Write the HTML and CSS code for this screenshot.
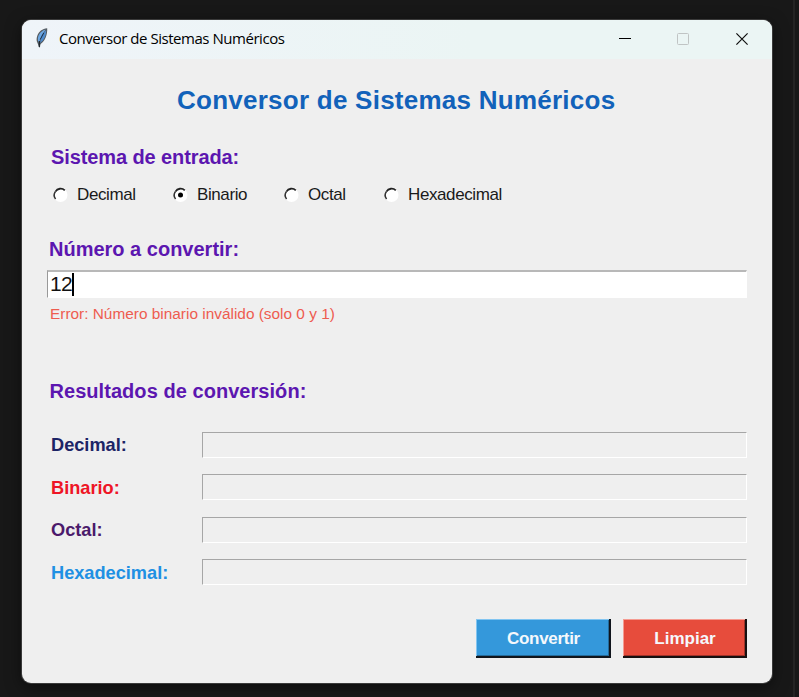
FILE: index.html
```html
<!DOCTYPE html>
<html lang="es">
<head>
<meta charset="utf-8">
<title>Conversor de Sistemas Numéricos</title>
<link rel="stylesheet" href="styles.css">
</head>
<body>
<svg class="defs" width="0" height="0" aria-hidden="true">
  <symbol id="radio" viewBox="0 0 16 16">
    <circle cx="8.5" cy="8" r="7" fill="#fff"/>
    <path d="M3.6 12 A6.1 6.1 0 0 1 3.4 4.6" fill="none" stroke="#333" stroke-width="1.6"/>
    <path d="M3.4 4.6 A6.1 6.1 0 0 1 12.8 3.4" fill="none" stroke="#222" stroke-width="1.8"/>
  </symbol>
</svg>
<main class="window">
  <header class="titlebar">
    <svg class="feather" viewBox="0 0 14 22" width="14" height="22">
      <path d="M12.2 1.2 C7.5 1.6 3.5 4.5 2.2 9 C1.3 12 1.4 14 2.6 16.3 L4.4 21 L5.6 17 C10 14 12.6 7.5 12.2 1.2Z" fill="#555b60"/>
      <path d="M10.6 2.5 C7 3.5 4 6.5 3.1 10 C2.6 12.5 3 14 3.9 15.8 L7 8Z" fill="#6ba6e2"/>
      <path d="M11.2 3 C11.2 8.5 9.4 12.8 5 16 L6.6 8.5Z" fill="#4e8bcd"/>
      <path d="M8.8 5.8 L5.2 12.5" fill="none" stroke="#182b40" stroke-width="1"/>
      <path d="M4.4 14 V20" fill="none" stroke="#222a32" stroke-width="1.3"/>
    </svg>
    <span class="caption">Conversor de Sistemas Numéricos</span>
    <svg class="controls" viewBox="0 0 125 13" width="125" height="13">
      <path d="M-1 5.5H11" stroke="#000"/>
      <rect x="57.5" y=".5" width="11" height="11" rx="1" fill="none" stroke="#c0c4c4"/>
      <path d="M116.4 .4L127.6 11.6M127.6 .4L116.4 11.6" stroke="#111" stroke-width="1.2"/>
    </svg>
  </header>
  <h1 class="title"><span>Conversor de Sistemas Numéricos</span></h1>
  <section class="source">
    <h2 class="heading heading-source">Sistema de entrada:</h2>
    <div class="options">
      <label class="option option-dec"><svg width="16" height="16"><use href="#radio"/></svg><span>Decimal</span></label>
      <label class="option option-bin"><svg width="16" height="16"><use href="#radio"/><circle cx="8.5" cy="8" r="2.5" fill="#000"/></svg><span>Binario</span></label>
      <label class="option option-oct"><svg width="16" height="16"><use href="#radio"/></svg><span>Octal</span></label>
      <label class="option option-hex"><svg width="16" height="16"><use href="#radio"/></svg><span>Hexadecimal</span></label>
    </div>
  </section>
  <section class="number">
    <h2 class="heading heading-number">Número a convertir:</h2>
    <div class="entry"><span>12</span><i class="caret"></i></div>
    <p class="error"><span>Error: Número binario inválido (solo 0 y 1)</span></p>
  </section>
  <section class="results">
    <h2 class="heading heading-results">Resultados de conversión:</h2>
    <div class="rows">
      <div class="row"><span class="label dec">Decimal:</span><div class="output"></div></div>
      <div class="row"><span class="label bin">Binario:</span><div class="output"></div></div>
      <div class="row"><span class="label oct">Octal:</span><div class="output"></div></div>
      <div class="row"><span class="label hex">Hexadecimal:</span><div class="output"></div></div>
    </div>
  </section>
  <footer class="actions">
    <button class="button convert">Convertir</button>
    <button class="button clear">Limpiar</button>
  </footer>
</main>
</body>
</html>
```
FILE: styles.css
```css
* { box-sizing: border-box; }
body {
  margin: 0;
  height: 697px;
  padding: 20px 27px 14px 22px;
  overflow: hidden;
  background: linear-gradient(to right, transparent 793px, #242424 793px 795px, transparent 795px), #181818;
  font-family: "Liberation Sans", Arial, sans-serif;
}
.defs { position: absolute; }
h1, h2, p { margin: 0; }
.window {
  width: 750px;
  height: 663px;
  border-radius: 9px;
  overflow: hidden;
  background: #efefef;
  box-shadow: 0 0 0 1px #3a3a3a, 0 4px 16px #0008;
}
.titlebar {
  display: flex;
  align-items: center;
  height: 39px;
  padding: 0 27px 0 13px;
  background: linear-gradient(to right, #eff4f9, #ebf5f4 60%);
}
.feather { flex: none; margin-top: -3px; }
.caption {
  margin: -3px 0 0 10px;
  font: 15px/36px "Open Sans", "Noto Sans", sans-serif;
  letter-spacing: -0.46px;
  color: #000;
  white-space: nowrap;
}
.controls { margin-left: auto; overflow: visible; }
.title {
  height: 82px;
  padding-left: 155px;
  font-size: 26px;
  line-height: 82px;
  letter-spacing: 0.25px;
  color: #1262ba;
  white-space: nowrap;
}
.heading {
  height: 32px;
  padding-left: 28px;
  font-size: 20px;
  line-height: 32px;
  color: #5c16b0;
}
.heading-source { padding-left: 29px; letter-spacing: -0.1px; }
.options { display: flex; height: 44px; padding-left: 30px; align-items: center; }
.option { display: flex; align-items: center; font-size: 17px; letter-spacing: -0.4px; color: #1a1a1a; }
.option svg { flex: none; margin-top: -1px; }
.option span { margin-left: 9px; white-space: nowrap; }
.option-dec { width: 120px; }
.option-bin { width: 111px; }
.option-oct { width: 100px; }
.number { padding: 16px 25px 0; }
.number .heading { padding-left: 2px; }
.entry {
  display: flex;
  align-items: center;
  height: 28px;
  margin-top: 5px;
  padding-left: 2px;
  border: 1px solid #fff;
  border-top: 2px solid #b8b8b8;
  border-left: 1px solid #999;
  background: #fff;
  font-size: 21px;
  letter-spacing: -0.7px;
  color: #111;
}
.entry span { margin-top: -1px; }
.caret { width: 2px; height: 23px; background: #000; }
.error { height: 30px; padding-left: 3px; font-size: 15.4px; line-height: 31px; color: #ee5c50; white-space: nowrap; }
.results { padding-top: 47px; }
.heading-results { padding-left: 27.5px; letter-spacing: 0.05px; }
.rows { display: grid; grid-auto-rows: 26px; row-gap: 16.5px; margin: 24.9px 25px 0 29px; }
.row { display: flex; align-items: center; }
.label { width: 151px; padding-top: 1.3px; font-size: 18.2px; font-weight: bold; white-space: nowrap; }
.output { flex: 1; height: 26px; border: 1px solid; border-color: #a6a6a6 #fff #fff #a6a6a6; }
.dec { color: #1c2466; }
.bin { color: #ee1526; }
.oct { color: #4b1a6b; }
.hex { color: #2090e3; }
.actions { display: flex; justify-content: flex-end; gap: 12px; margin: 33.6px 25px 0 0; }
.button {
  height: 39px;
  padding: 0;
  border: 0;
  font: bold 17px/37px "Liberation Sans", Arial, sans-serif;
  color: #f5f8fc;
}
.convert { width: 135px; letter-spacing: -0.3px; background: #3498db; box-shadow: inset -2px -2px #10151c, inset 1px 1px #82c5f1, inset -3px -3px #246a99; }
.clear { width: 124px; background: #e74c3c; box-shadow: inset -2px -2px #161010, inset 1px 1px #f59b91, inset -3px -3px #9f3329; }
```
